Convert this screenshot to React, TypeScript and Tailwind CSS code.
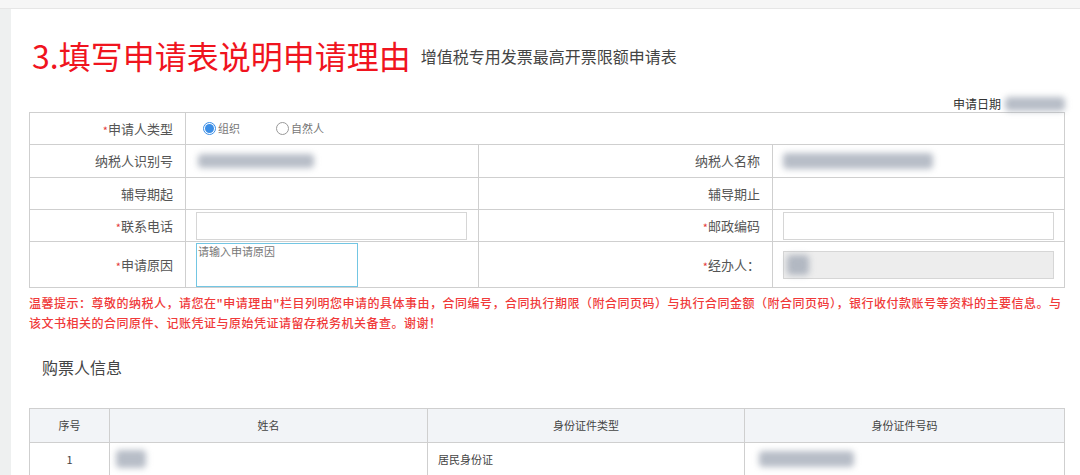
import React from 'react';

const font = { fontFamily: '"Noto Sans CJK SC", "Noto Sans", sans-serif' };

function Smudge({ className }: { className: string }) {
  // masked / blurred private data
  return <span className={`inline-block rounded-sm bg-gray-400/70 blur-[3px] ${className}`} />;
}

function Label({ text, required }: { text: string; required?: boolean }) {
  return (
    <td className="border border-[#cfcfcf] pr-[12px] text-right text-[13px] text-[#555]">
      {required && <span className="text-[#e4393c] text-[11px] align-middle">*</span>}
      {text}
    </td>
  );
}

function Radio({ checked, text }: { checked?: boolean; text: string }) {
  return (
    <span className="inline-flex items-center gap-[2px] text-[11px] text-[#777]">
      <span
        className={`flex h-[13px] w-[13px] items-center justify-center rounded-full border ${
          checked ? 'border-[#3b8ee6]' : 'border-[#999]'
        }`}
      >
        {checked && <span className="h-[9px] w-[9px] rounded-full bg-[#3b8ee6]" />}
      </span>
      {text}
    </span>
  );
}

export default function App() {
  return (
    <div className="flex h-[475px] w-[1080px] flex-col overflow-hidden bg-white" style={font}>
      <div className="h-[9px] shrink-0 border-b border-[#e6e6e6] bg-[#f6f6f6]" />
      <div className="flex flex-1">
        <div className="w-[11px] shrink-0 bg-[#eef0f0]" />
        <div className="flex-1 pl-[18px] pr-[16px]">
          {/* Title */}
          <div className="mt-[28px] flex items-center">
            <h1 className="ml-[3px] text-[32px] leading-[36px] text-[#f0141e]">3.填写申请表说明申请理由</h1>
            <span className="ml-[10px] mt-[2px] text-[16px] text-[#444]">增值税专用发票最高开票限额申请表</span>
          </div>

          {/* Date */}
          <div className="mt-[22px] flex h-[17px] items-center justify-end text-[12px] text-[#333]">
            申请日期
            <Smudge className="ml-[4px] h-[14px] w-[60px]" />
          </div>

          {/* Application form */}
          <table className="w-[1035px] table-fixed border-collapse">
            <colgroup>
              <col className="w-[156px]" />
              <col className="w-[293px]" />
              <col className="w-[294px]" />
              <col className="w-[292px]" />
            </colgroup>
            <tbody>
              <tr className="h-[32px]">
                <Label text="申请人类型" required />
                <td colSpan={3} className="border border-[#cfcfcf] pl-[17px]">
                  <div className="flex items-center gap-[36px]">
                    <Radio checked text="组织" />
                    <Radio text="自然人" />
                  </div>
                </td>
              </tr>
              <tr className="h-[33px]">
                <Label text="纳税人识别号" />
                <td className="border border-[#cfcfcf] pl-[12px]">
                  <Smudge className="mt-[4px] h-[14px] w-[116px]" />
                </td>
                <Label text="纳税人名称" />
                <td className="border border-[#cfcfcf] pl-[10px]">
                  <Smudge className="mt-[4px] h-[16px] w-[150px]" />
                </td>
              </tr>
              <tr className="h-[32px]">
                <Label text="辅导期起" />
                <td className="border border-[#cfcfcf]" />
                <Label text="辅导期止" />
                <td className="border border-[#cfcfcf]" />
              </tr>
              <tr className="h-[32px]">
                <Label text="联系电话" required />
                <td className="border border-[#cfcfcf] pl-[10px]">
                  <input className="block h-[28px] w-[271px] border border-[#d6d6d6] bg-white outline-none" />
                </td>
                <Label text="邮政编码" required />
                <td className="border border-[#cfcfcf] pl-[10px]">
                  <input className="block h-[28px] w-[271px] border border-[#d6d6d6] bg-white outline-none" />
                </td>
              </tr>
              <tr className="h-[45px]">
                <Label text="申请原因" required />
                <td className="border border-[#cfcfcf] pl-[10px] align-top">
                  <textarea
                    placeholder="请输入申请原因"
                    className="mt-[1px] block h-[44px] w-[162px] resize-none border border-[#73c6e3] px-[1px] text-[11px] leading-[14px] text-[#666] outline-none placeholder:text-[#777]"
                  />
                </td>
                <Label text="经办人：" required />
                <td className="border border-[#cfcfcf] pl-[10px]">
                  <div className="flex h-[28px] w-[271px] items-center border border-[#d6d6d6] bg-[#ededed] pl-[3px]">
                    <Smudge className="h-[20px] w-[22px]" />
                  </div>
                </td>
              </tr>
            </tbody>
          </table>

          {/* Tip */}
          <p className="mt-[5px] text-[12px] font-medium leading-[20px] tracking-[0.5px] text-[#f03a3a]">
            温馨提示：尊敬的纳税人，请您在"申请理由"栏目列明您申请的具体事由，合同编号，合同执行期限（附合同页码）与执行合同金额（附合同页码），银行收付款账号等资料的主要信息。与
            <br />
            该文书相关的合同原件、记账凭证与原始凭证请留存税务机关备查。谢谢！
          </p>

          <h2 className="ml-[13px] mt-[22px] text-[16px] leading-[24px] text-[#444]">购票人信息</h2>

          {/* Buyer table */}
          <table className="mt-[29px] w-[1035px] table-fixed border-collapse text-[11px] text-[#444]">
            <colgroup>
              <col className="w-[80px]" />
              <col className="w-[318px]" />
              <col className="w-[317px]" />
              <col className="w-[320px]" />
            </colgroup>
            <thead>
              <tr className="h-[34px] bg-[#f2f4f7]">
                <th className="border border-[#cfcfcf] font-normal">序号</th>
                <th className="border border-[#cfcfcf] font-normal">姓名</th>
                <th className="border border-[#cfcfcf] font-normal">身份证件类型</th>
                <th className="border border-[#cfcfcf] font-normal">身份证件号码</th>
              </tr>
            </thead>
            <tbody>
              <tr className="h-[33px]">
                <td className="border border-[#cfcfcf] text-center">1</td>
                <td className="border border-[#cfcfcf] pl-[6px]">
                  <Smudge className="mt-[4px] h-[18px] w-[30px] bg-gray-300" />
                </td>
                <td className="border border-[#cfcfcf] pl-[10px]">居民身份证</td>
                <td className="border border-[#cfcfcf] pl-[14px]">
                  <Smudge className="mt-[4px] h-[16px] w-[95px] bg-gray-300" />
                </td>
              </tr>
            </tbody>
          </table>
        </div>
      </div>
    </div>
  );
}
